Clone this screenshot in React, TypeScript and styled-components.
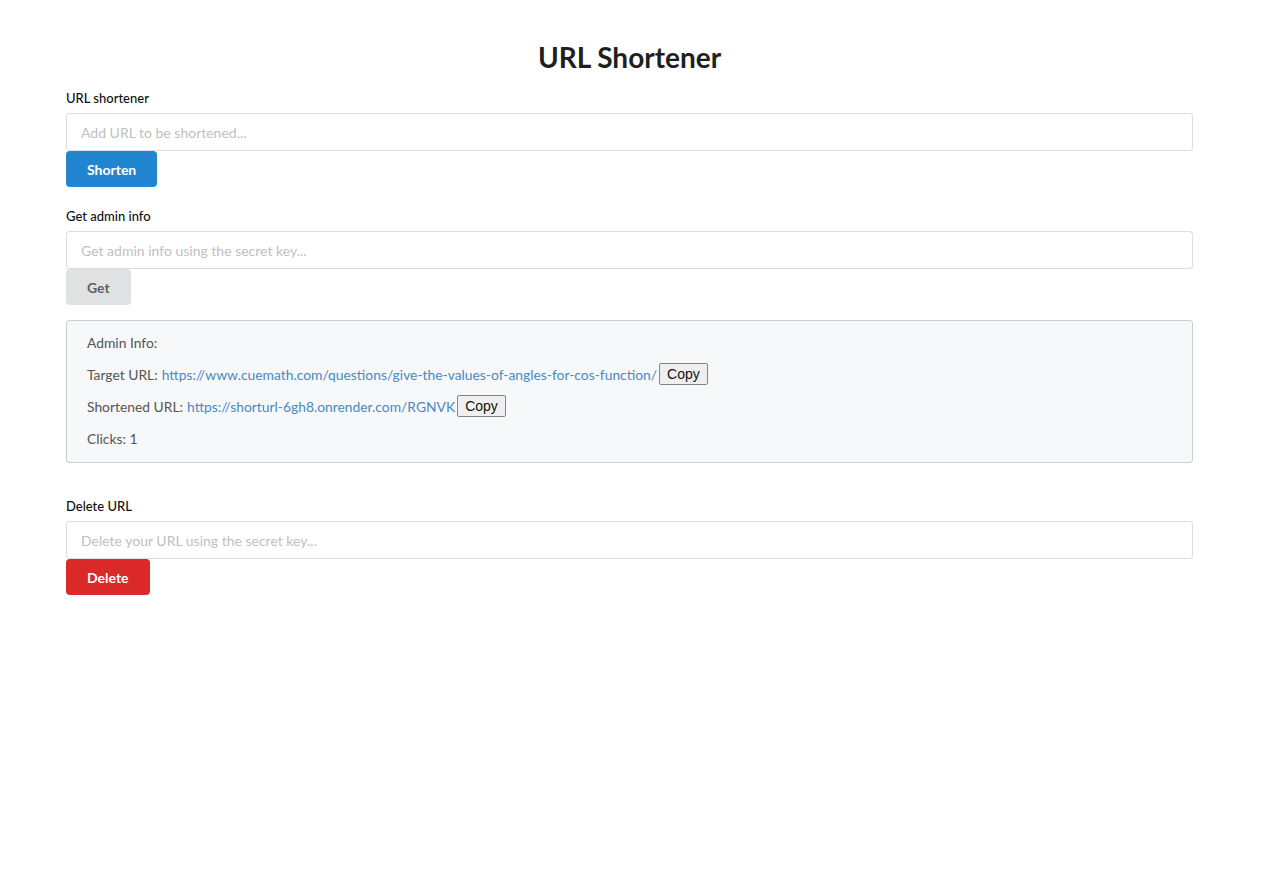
import React from "react";
import styled, { createGlobalStyle } from "styled-components";

const Global = createGlobalStyle`
  html, body { margin: 0; padding: 0; background: #fff; }
  body { font-family: Lato, "Helvetica Neue", Arial, sans-serif; font-size: 14px; color: rgba(0,0,0,0.87); }
  * { box-sizing: border-box; }
`;

const Container = styled.div`
  width: 1127px;
  margin-left: 66px;
  padding-top: 38px;
  display: flex;
  flex-direction: column;
`;

const Title = styled.h1`
  margin: 0 0 14px;
  text-align: center;
  font-family: Lato, sans-serif;
  font-weight: 700;
  font-size: 28px;
  line-height: 38px;
  color: #1f1f1f;
`;

const Field = styled.div<{ $mt?: number }>`
  display: flex;
  flex-direction: column;
  margin-top: ${(p) => p.$mt ?? 0}px;
`;

const Label = styled.label`
  font-family: Lato, sans-serif;
  font-size: 13px;
  font-weight: 500;
  color: #111;
  line-height: 16px;
  margin-bottom: 7px;
`;

const Input = styled.input`
  height: 38px;
  width: 100%;
  border: 1px solid rgba(34, 36, 38, 0.15);
  border-radius: 4px;
  padding: 0 14px;
  font-family: Lato, sans-serif;
  font-size: 14px;
  color: rgba(0,0,0,0.87);
  outline: none;
  &::placeholder { color: #bfbfbf; }
`;

const variants = {
  primary: { bg: "#2185d0", fg: "#fff" },
  grey: { bg: "#e0e1e2", fg: "rgba(0,0,0,0.6)" },
  red: { bg: "#db2828", fg: "#fff" },
};

const Button = styled.button<{ $v: keyof typeof variants }>`
  align-self: flex-start;
  height: 36px;
  margin-top: 0;
  padding: 0 21px;
  border: none;
  border-radius: 4px;
  background: ${(p) => variants[p.$v].bg};
  color: ${(p) => variants[p.$v].fg};
  font-family: Lato, sans-serif;
  font-weight: 700;
  font-size: 14px;
  cursor: pointer;
`;

const Segment = styled.div`
  margin-top: 15px;
  background: #f7f8f9;
  border: 1px solid rgba(34, 36, 38, 0.2);
  border-radius: 4px;
  padding: 5px 20px 8px;
  display: flex;
  flex-direction: column;
  font-family: Lato, sans-serif;
  font-size: 13.85px;
  color: #555;
`;

const InfoLine = styled.div`
  display: flex;
  align-items: center;
  height: 32px;
  white-space: nowrap;
`;

const Link = styled.a`
  color: #4a89c2;
  text-decoration: none;
  margin-left: 4px;
`;

const CopyBtn = styled.button`
  margin-left: 2px;
  font-family: "Liberation Sans", Arial, sans-serif;
  font-size: 14px;
  padding: 0 7px;
  height: 22px;
  border: 1px solid #858585;
  border-radius: 2px;
  background: #efefef;
  color: #111;
`;

export default function App() {
  return (
    <>
      <Global />
      <Container>
        <Title>URL Shortener</Title>
        <Field>
          <Label>URL shortener</Label>
          <Input placeholder="Add URL to be shortened..." />
          <Button $v="primary">Shorten</Button>
        </Field>
        <Field $mt={21}>
          <Label>Get admin info</Label>
          <Input placeholder="Get admin info using the secret key..." />
          <Button $v="grey">Get</Button>
        </Field>
        <Segment>
          <InfoLine>Admin Info:</InfoLine>
          <InfoLine>
            Target URL:
            <Link href="#">https://www.cuemath.com/questions/give-the-values-of-angles-for-cos-function/</Link>
            <CopyBtn>Copy</CopyBtn>
          </InfoLine>
          <InfoLine>
            Shortened URL:
            <Link href="#">https://shorturl-6gh8.onrender.com/RGNVK</Link>
            <CopyBtn>Copy</CopyBtn>
          </InfoLine>
          <InfoLine>Clicks: 1</InfoLine>
        </Segment>
        <Field $mt={35}>
          <Label>Delete URL</Label>
          <Input placeholder="Delete your URL using the secret key..." />
          <Button $v="red">Delete</Button>
        </Field>
      </Container>
    </>
  );
}
